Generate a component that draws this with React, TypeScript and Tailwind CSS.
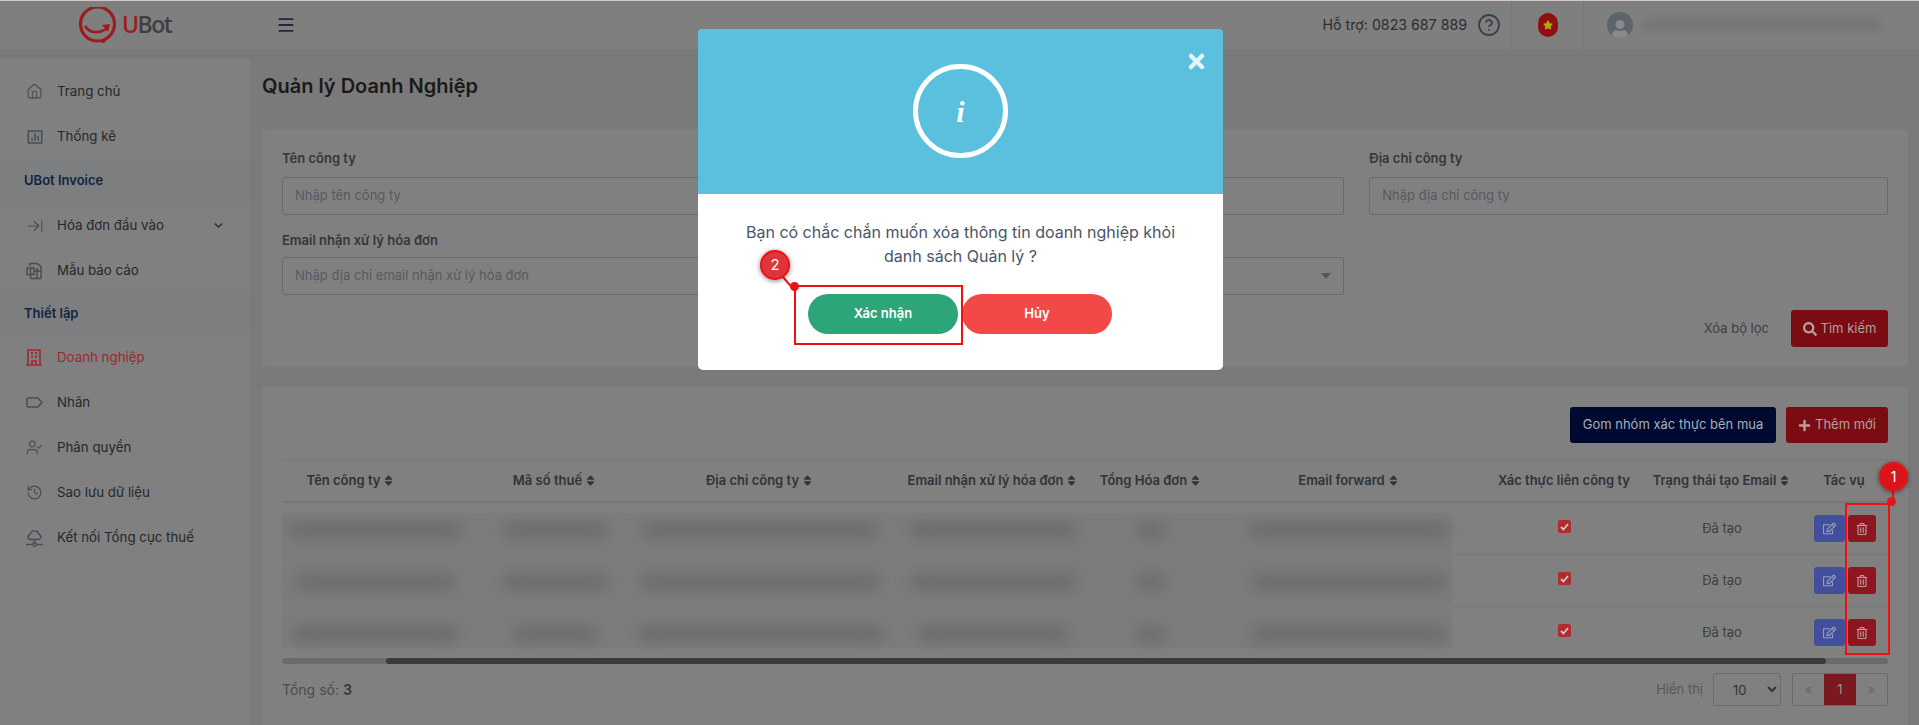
import { ArrowRightToLine, ChevronDown, CircleHelp, History, House, Menu, UserCheck } from "lucide-react";
import { FaPlus, FaRegEdit, FaRegTrashAlt, FaSearch, FaSort, FaStar, FaTimes, FaUser } from "react-icons/fa";
import { RiBarChartBoxLine } from "react-icons/ri";
import type { ReactNode } from "react";

function ReportIcon() {
  return (
    <svg width="16" height="18" viewBox="0 0 16 18" fill="none" stroke="currentColor" strokeWidth="1.5">
      <path d="M4 4V1.5h7l4 3V16.5H4" />
      <rect x="1" y="6" width="7" height="6.5" />
      <path d="M4.5 6v10.5M8 9h7M11 6v10" />
    </svg>
  );
}

function BuildingIcon() {
  return (
    <svg width="16" height="17" viewBox="0 0 16 17" fill="none" stroke="currentColor" strokeWidth="1.6">
      <path d="M0 16h16M2 16V1h12v15M6 16v-4h4v4" />
      <path d="M5 4h2M9 4h2M5 7.5h2M9 7.5h2" strokeWidth="2" />
    </svg>
  );
}

function TagIcon() {
  return (
    <svg width="17" height="11" viewBox="0 0 17 11" fill="none" stroke="currentColor" strokeWidth="1.5">
      <path d="M2.5 1h9.5l4 4.5-4 4.5H2.5A1.5 1.5 0 0 1 1 8.5v-6A1.5 1.5 0 0 1 2.5 1z" />
    </svg>
  );
}

function NetworkIcon() {
  return (
    <svg width="17" height="18" viewBox="0 0 17 18" fill="none" stroke="currentColor" strokeWidth="1.4">
      <path d="M4.5 10.5a2.6 2.6 0 0 1-.4-5.1 4.5 4.5 0 0 1 8.8 0 2.6 2.6 0 0 1-.4 5.1z" />
      <path d="M8.5 10.5v4M0 15.5h6.5M10.5 15.5H17" />
      <circle cx="8.5" cy="15.5" r="1.7" />
    </svg>
  );
}

function Logo() {
  return (
    <svg width="40" height="36" viewBox="0 0 40 36" fill="none">
      <circle cx="19.5" cy="17" r="17" stroke="#9d1c20" strokeWidth="3.2" />
      <path d="M7 19c4 7 14 8 21 3" stroke="#9d1c20" strokeWidth="2.6" />
      <path d="M24 18l8-1-2 8zM22 34l6-1-2 4z" fill="#9d1c20" />
    </svg>
  );
}

function NavItem({ icon, label, active, chevron }: { icon: ReactNode; label: string; active?: boolean; chevron?: boolean }) {
  return (
    <div className={`flex h-[45px] items-center pl-[26px] pr-[25px] text-[13.3px] ${active ? "text-[#9c2a2f]" : "text-[#26282b]"}`}>
      <span className={`flex w-[31px] shrink-0 ${active ? "text-[#9c2a2f]" : "text-[#474d56]"}`}>{icon}</span>
      <span className="flex-1">{label}</span>
      {chevron && <ChevronDown size={13} strokeWidth={2.5} className="text-[#222]" />}
    </div>
  );
}

function Field({ label, placeholder, caret, labelGap = "mb-[7px]" }: { label: string; placeholder?: string; caret?: boolean; labelGap?: string }) {
  return (
    <div>
      <div className={`${labelGap} h-[20px] text-[13px] leading-[20px] font-semibold text-[#33363b]`}>{label}</div>
      <div className="flex h-[38px] items-center rounded-[3px] border border-[#6b6b6b] px-[12px] text-[13px] text-[#565b62]">
        {placeholder}
        {caret && <span className="ml-auto h-0 w-0 border-x-[5px] border-t-[6px] border-x-transparent border-t-[#555]" />}
      </div>
    </div>
  );
}

const columns = [
  { label: "Tên công ty", sort: true, className: "pr-[68px]" },
  { label: "Mã số thuế", sort: true },
  { label: "Địa chỉ công ty", sort: true },
  { label: "Email nhận xử lý hóa đơn", sort: true },
  { label: "Tổng Hóa đơn", sort: true },
  { label: "Email forward", sort: true },
  { label: "Xác thực liên công ty" },
  { label: "Trạng thái tạo Email", sort: true },
  { label: "Tác vụ" },
];

// redacted cells in the picture: widths of the smudges per column
const rows = [
  [172, 105, 235, 166, 28, 200],
  [160, 107, 240, 166, 30, 195],
  [165, 85, 245, 150, 30, 195],
];

const gridCols = "grid grid-cols-[206px_134px_276px_190px_126px_270px_160px_156px_88px]";

export default function App() {
  return (
    <div className="relative flex h-screen w-full flex-col overflow-hidden bg-[#7a7a7a] font-[Inter,sans-serif] text-[13px] text-[#333]">
      {/* Top bar */}
      <header className="flex h-[49px] shrink-0 items-center bg-[#7f7f7f]">
        <div className="flex w-[276px] items-center pl-[78px]">
          <Logo />
          <span className="ml-[4px] font-['Open_Sans',sans-serif] text-[23px] leading-none font-semibold tracking-[-1.5px] text-[#3f3f42]">
            <span className="text-[#9d1c20]">U</span>Bot
          </span>
        </div>
        <Menu size={20} strokeWidth={2.2} className="text-[#1f2937]" />
        <div className="ml-auto flex h-full items-center">
          <span className="text-[14.2px] text-[#2b2d30]">Hỗ trợ: 0823 687 889</span>
          <CircleHelp size={24} strokeWidth={1.8} className="mr-[10px] ml-[10px] text-[#3c4046]" />
          <div className="flex h-full w-[73px] items-center justify-center border-x border-[#777]">
            <span className="flex h-[24px] w-[20px] items-center justify-center rounded-full bg-[#8f1010]">
              <FaStar size={10} className="text-[#b3a516]" />
            </span>
          </div>
          <div className="flex h-full w-[335px] items-center pl-[23px]">
            <span className="flex h-[26px] w-[26px] items-end justify-center overflow-hidden rounded-full bg-[#5f636b]">
              <FaUser size={18} className="text-[#8a8a8a]" />
            </span>
            <span className="ml-[10px] h-[10px] w-[238px] bg-[#737373] blur-[5px]" />
          </div>
        </div>
      </header>

      <div className="flex min-h-0 flex-1 pt-[10px]">
        {/* Sidebar */}
        <aside className="w-[250px] shrink-0 bg-[#808080] pt-[10px]">
          <NavItem icon={<House size={17} strokeWidth={1.5} />} label="Trang chủ" />
          <NavItem icon={<RiBarChartBoxLine size={18} />} label="Thống kê" />
          <div className="flex h-[44px] items-center bg-[#7c7e80] pl-[24px] text-[13px] font-semibold text-[#14233f]">UBot Invoice</div>
          <NavItem icon={<ArrowRightToLine size={18} strokeWidth={1.5} />} label="Hóa đơn đầu vào" chevron />
          <NavItem icon={<ReportIcon />} label="Mẫu báo cáo" />
          <div className="flex h-[42px] items-center bg-[#7c7e80] pl-[24px] text-[13px] font-semibold text-[#14233f]">Thiết lập</div>
          <NavItem icon={<BuildingIcon />} label="Doanh nghiệp" active />
          <NavItem icon={<TagIcon />} label="Nhãn" />
          <NavItem icon={<UserCheck size={17} strokeWidth={1.5} />} label="Phân quyền" />
          <NavItem icon={<History size={17} strokeWidth={1.6} />} label="Sao lưu dữ liệu" />
          <NavItem icon={<NetworkIcon />} label="Kết nối Tổng cục thuế" />
        </aside>

        {/* Main */}
        <main className="min-w-0 flex-1 pr-[11px] pl-[12px]">
          <h1 className="flex h-[70px] items-center pb-[16px] text-[20px] font-semibold text-[#1a1a1a]">Quản lý Doanh Nghiệp</h1>

          {/* Filters */}
          <section className="h-[238px] rounded-[3px] bg-[#808080] px-[20px] pt-[19px]">
            <div className="grid grid-cols-3 gap-x-[25px] gap-y-[15px]">
              <Field label="Tên công ty" placeholder="Nhập tên công ty" labelGap="mb-[9px]" />
              <Field label="" labelGap="mb-[9px]" />
              <Field label="Địa chỉ công ty" placeholder="Nhập địa chỉ công ty" labelGap="mb-[9px]" />
              <Field label="Email nhận xử lý hóa đơn" placeholder="Nhập địa chỉ email nhận xử lý hóa đơn" />
              <Field label="" caret />
            </div>
            <div className="mt-[15px] flex items-center justify-end">
              <span className="mr-[22px] text-[#3d3f42]">Xóa bộ lọc</span>
              <button className="flex h-[37px] w-[97px] items-center justify-center gap-[4px] rounded-[3px] bg-[#7a0c12] text-[#b3a0a0]">
                <FaSearch size={14} />
                Tìm kiếm
              </button>
            </div>
          </section>

          {/* Company table */}
          <section className="mt-[20px] h-[400px] rounded-[3px] bg-[#808080] px-[20px] pt-[20px]">
            <div className="flex justify-end gap-[10px] pb-[16px]">
              <button className="h-[36px] w-[206px] rounded-[3px] bg-[#000a30] text-[#a9aebb]">Gom nhóm xác thực bên mua</button>
              <button className="flex h-[36px] w-[102px] items-center justify-center gap-[4px] rounded-[3px] bg-[#7a0c12] text-[#b3a0a0]">
                <FaPlus size={13} />
                Thêm mới
              </button>
            </div>

            <div className={`${gridCols} h-[44px] border-y border-b-2 border-t-[#777] border-b-[#777]`}>
              {columns.map((col) => (
                <div key={col.label} className={`flex items-center justify-center gap-[2px] font-semibold whitespace-nowrap text-[#303338] ${col.className ?? ""}`}>
                  {col.label}
                  {col.sort && <FaSort size={13} className="text-[#303338]" />}
                </div>
              ))}
            </div>

            <div className="relative">
              <div className="absolute top-[10px] left-0 h-[135px] w-[1170px] bg-[#7b7c7c]" />
              {rows.map((row, i) => (
                <div key={i} className={`${gridCols} ${i < 2 ? "h-[52px] border-b border-[#777]" : "h-[51px]"}`}>
                  {row.map((w, j) => (
                    <div key={j} className={`relative flex items-center justify-center pt-[2px] ${j === 0 ? "pr-[20px]" : ""}`}>
                      <span className="h-[14px] rounded-full bg-[#6a6b6c] blur-[7px]" style={{ width: w }} />
                    </div>
                  ))}
                  <div className="flex items-center justify-center">
                    <span className="mb-[4px] flex h-[13px] w-[13px] items-center justify-center rounded-[2px] bg-[#b02c2f]">
                      <svg width="9" height="8" viewBox="0 0 9 8" fill="none" stroke="#d8c8c8" strokeWidth="1.8">
                        <path d="M1 4l2.5 2.5L8 1" />
                      </svg>
                    </span>
                  </div>
                  <div className="flex items-center justify-center text-[#3d3f42]">Đã tạo</div>
                  <div className="flex items-center justify-end gap-[3px] pr-[12px]">
                    <button className="flex h-[27px] w-[31px] items-center justify-center rounded-[3px] bg-[#414f9c] text-[#9a9fb8]">
                      <FaRegEdit size={13} />
                    </button>
                    <button className="flex h-[27px] w-[28px] items-center justify-center rounded-[3px] bg-[#8d1620] text-[#c49aa0]">
                      <FaRegTrashAlt size={12} />
                    </button>
                  </div>
                </div>
              ))}
            </div>

            <div className="h-[6px] overflow-hidden rounded-full bg-[#6a6a6a]">
              <div className="ml-[104px] h-full w-[1440px] rounded-full bg-[#3a3a3a]" />
            </div>

            <div className="mt-[9px] flex items-center">
              <span className="text-[14px] text-[#4a4c50]">
                Tổng số: <b className="font-bold text-[#3a3c40]">3</b>
              </span>
              <span className="ml-auto text-[#55585c]">Hiển thị</span>
              <select className="ml-[10px] h-[33px] w-[68px] rounded-[3px] border border-[#6b6b6b] pl-[15px] text-[13px] text-[#333]">
                <option>10</option>
              </select>
              <div className="ml-[11px] flex h-[33px] w-[96px] rounded-[3px] border border-[#6b6b6b] text-[#666]">
                <span className="flex w-[31px] items-center justify-center">«</span>
                <span className="flex w-[33px] items-center justify-center bg-[#7a1a1e] text-[#a89090]">1</span>
                <span className="flex w-[31px] items-center justify-center">»</span>
              </div>
            </div>
          </section>
        </main>
      </div>

      {/* Confirm dialog */}
      <div className="absolute top-[29px] left-[698px] flex h-[341px] w-[525px] flex-col overflow-hidden rounded-[5px] bg-white">
        <div className="relative flex h-[165px] items-center justify-center bg-[#5bc0de]">
          <span className="mt-[-1px] flex h-[94px] w-[95px] items-center justify-center rounded-full border-[5px] border-white font-['Liberation_Serif',serif] text-[30px] font-bold text-white italic">
            i
          </span>
          <FaTimes size={23} className="absolute top-[21px] right-[15px] text-[#e6f4f8]" />
        </div>
        <p className="mx-auto mt-[26px] w-[450px] text-center text-[16px] leading-[24px] text-[#4a5568]">
          Bạn có chắc chắn muốn xóa thông tin doanh nghiệp khỏi danh sách Quản lý ?
        </p>
        <div className="mt-[26px] flex gap-[4px] pl-[110px]">
          <button className="h-[40px] w-[150px] rounded-full bg-[#2ca579] text-[13px] font-semibold text-white">Xác nhận</button>
          <button className="h-[40px] w-[150px] rounded-full bg-[#f24848] text-[13px] font-semibold text-white">Hủy</button>
        </div>
      </div>

      {/* Tutorial annotations */}
      <div className="absolute top-[285px] left-[794px] h-[60px] w-[169px] border-2 border-[#f01010]" />
      <div className="absolute top-[282px] left-[790px] h-[9px] w-[9px] rounded-full bg-[#e8141c]" />
      <div className="absolute top-[276px] left-[783px] h-[2px] w-[14px] origin-left rotate-[50deg] bg-[#e8141c]" />
      <div className="absolute top-[250px] left-[760px] flex h-[30px] w-[30px] items-center justify-center rounded-full border-2 border-[#ee1111] bg-[#e0343a] text-[15px] text-white shadow-[0_1px_5px_rgba(0,0,0,0.5)]">
        2
      </div>

      <div className="absolute top-[503px] left-[1845px] h-[152px] w-[45px] border-2 border-[#f01010]" />
      <div className="absolute top-[497px] left-[1887px] h-[9px] w-[9px] rounded-full bg-[#e8141c]" />
      <div className="absolute top-[488px] left-[1892px] h-[10px] w-[2px] bg-[#e8141c]" />
      <div className="absolute top-[462px] left-[1879px] flex h-[29px] w-[29px] items-center justify-center rounded-full border-2 border-[#ee1111] bg-[#d9141c] text-[14px] text-white shadow-[0_1px_5px_rgba(0,0,0,0.5)]">
        1
      </div>
      <div className="absolute top-0 left-0 h-px w-full bg-[#d6c6c6]" />
    </div>
  );
}
